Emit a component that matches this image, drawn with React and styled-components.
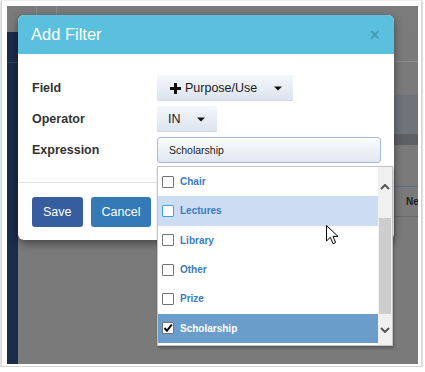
import styled, { createGlobalStyle } from 'styled-components';

const GlobalStyle = createGlobalStyle`
    html, body {
        margin: 0;
        padding: 0;
        background: #fff;
    }
    body {
        font-family: "Liberation Sans", Arial, sans-serif;
    }
    * {
        box-sizing: border-box;
    }
`;

const options = [
    { label: 'Chair', state: 'idle' },
    { label: 'Lectures', state: 'hover' },
    { label: 'Library', state: 'idle' },
    { label: 'Other', state: 'idle' },
    { label: 'Prize', state: 'idle' },
    { label: 'Scholarship', state: 'selected' },
];

function Caret() {
    return (
        <svg width="8" height="5" viewBox="0 0 8 5">
            <path d="M0 0.5 L8 0.5 L4 4.5 Z" fill="#111" />
        </svg>
    );
}

function Plus() {
    return (
        <svg width="11" height="11" viewBox="0 0 11 11">
            <rect x="4" y="0" width="3" height="11" fill="#111" />
            <rect x="0" y="4" width="11" height="3" fill="#111" />
        </svg>
    );
}

function Chevron({ down }) {
    return (
        <svg width="10" height="6" viewBox="0 0 10 6">
            <polyline
                points={down ? '1,1 5,5 9,1' : '1,5 5,1 9,5'}
                fill="none"
                stroke="#555"
                strokeWidth="2"
            />
        </svg>
    );
}

function Check() {
    return (
        <svg width="10" height="10" viewBox="0 0 10 10">
            <polyline points="1.5,5 4,7.8 8.8,1.5" fill="none" stroke="#000" strokeWidth="2" />
        </svg>
    );
}

function Pointer() {
    return (
        <svg width="13" height="20" viewBox="0 0 13 20">
            <path
                d="M0.5 0.5 L0.5 16 L4.3 12.3 L7 18.7 L9.6 17.6 L7 11.4 L12 11.4 Z"
                fill="#fff"
                stroke="#000"
                strokeWidth="1"
                strokeLinejoin="round"
            />
        </svg>
    );
}

export default function App() {
    return (
        <>
            <GlobalStyle />
            <Frame>
                <Screen>
                    <TopBar>
                        <TopCell $w={30} />
                        <TopCell $w={20} />
                    </TopBar>
                    <Sidebar>
                        <SideBlock />
                    </Sidebar>
                    <Content>
                        <Band $h={29} $line="#8b8b8b" />
                        <Band $h={33} />
                        <Band $h={39} $bg="#6f737a" />
                        <Band $h={11} $bg="#5f6063" />
                        <Band $h={41} $line="#5e6f88" />
                        <HeaderRow>Ne</HeaderRow>
                    </Content>

                    <Modal>
                        <ModalHeader>
                            <Title>Add Filter</Title>
                            <Close>×</Close>
                        </ModalHeader>
                        <ModalBody>
                            <Label>Field</Label>
                            <div>
                                <DropButton>
                                    <Plus />
                                    <ButtonText>Purpose/Use</ButtonText>
                                    <Caret />
                                </DropButton>
                            </div>
                            <Label>Operator</Label>
                            <div>
                                <DropButton $small>
                                    <ButtonText>IN</ButtonText>
                                    <Caret />
                                </DropButton>
                            </div>
                            <Label>Expression</Label>
                            <ExpressionInput>Scholarship</ExpressionInput>
                        </ModalBody>
                        <ModalFooter>
                            <ActionButton $variant="save">Save</ActionButton>
                            <ActionButton>Cancel</ActionButton>
                        </ModalFooter>
                    </Modal>

                    <Dropdown>
                        <List>
                            {options.map(({ label, state }) => (
                                <Option key={label} $state={state}>
                                    <CheckBox $state={state}>
                                        {state === 'selected' && <Check />}
                                    </CheckBox>
                                    {label}
                                </Option>
                            ))}
                        </List>
                        <ScrollBar>
                            <ScrollArrow $h={40}>
                                <Chevron />
                            </ScrollArrow>
                            <Thumb />
                            <ScrollArrow $grow>
                                <Chevron down />
                            </ScrollArrow>
                        </ScrollBar>
                    </Dropdown>

                    <Cursor>
                        <Pointer />
                    </Cursor>
                </Screen>
            </Frame>
        </>
    );
}

const Frame = styled.div`
    width: 421px;
    height: 367px;
    margin-left: 1px;
    padding: 5px 3px 2px 5px;
    background: #fff;
    border: 1px solid #d4d4d4;
    border-top-color: #ededed;
    box-shadow: 0 1px 2px rgba(0, 0, 0, 0.35);
`;

const Screen = styled.div`
    position: relative;
    width: 411px;
    height: 358px;
    overflow: hidden;
    display: grid;
    grid-template-columns: 11px 1fr;
    grid-template-rows: 26px 1fr;
    background: #7a7a7a;
`;

const TopBar = styled.div`
    grid-column: 1 / -1;
    display: flex;
    background: #7b7b7b;
`;

const TopCell = styled.div`
    width: ${({ $w }) => $w}px;
    height: 100%;
    border-right: 1px solid #8a8a8a;
`;

const Sidebar = styled.div`
    background: #1b2b4a;
`;

const SideBlock = styled.div`
    height: 31px;
    border-bottom: 1px solid #2f4165;
`;

const Content = styled.div`
    display: flex;
    flex-direction: column;
    background: #7a7a7a;
`;

const Band = styled.div`
    flex-shrink: 0;
    height: ${({ $h, $line }) => $h + ($line ? 1 : 0)}px;
    background: ${({ $bg }) => $bg || 'transparent'};
    border-bottom: ${({ $line }) => ($line ? `1px solid ${$line}` : 'none')};
`;

const HeaderRow = styled.div`
    flex-shrink: 0;
    height: 30px;
    display: flex;
    align-items: center;
    padding-left: 388px;
    border-bottom: 1px solid #6b6b6b;
    font-size: 10px;
    font-weight: 700;
    color: #1e1e1e;
    white-space: nowrap;
`;

const Modal = styled.div`
    position: absolute;
    left: 11px;
    top: 9px;
    width: 376px;
    height: 225px;
    background: #fff;
    border-radius: 6px;
    overflow: hidden;
    box-shadow: 0 3px 9px rgba(0, 0, 0, 0.45);
`;

const ModalHeader = styled.div`
    height: 39px;
    padding: 0 14px 0 13px;
    display: flex;
    align-items: center;
    justify-content: space-between;
    background: #5bc0de;
`;

const Title = styled.div`
    font-size: 16.5px;
    color: #fff;
`;

const Close = styled.div`
    font-size: 18px;
    font-weight: 700;
    line-height: 1;
    color: rgba(0, 0, 0, 0.2);
`;

const ModalBody = styled.div`
    height: 128px;
    padding: 21px 14px 0;
    display: grid;
    grid-template-columns: 125px 1fr;
    grid-template-rows: 26px 26px 26px;
    row-gap: 5px;
`;

const Label = styled.div`
    display: flex;
    align-items: center;
    font-size: 12.5px;
    font-weight: 700;
    color: #333;
`;

const DropButton = styled.div`
    display: inline-flex;
    align-items: center;
    height: 26px;
    width: ${({ $small }) => ($small ? 60 : 136)}px;
    padding-left: ${({ $small }) => ($small ? 11 : 13)}px;
    border-radius: 2px;
    background: linear-gradient(#f4f7fb, #dbe3ee);
    box-shadow: inset 0 -1px 0 #d0d9e6;

    & > svg:last-child {
        margin-left: ${({ $small }) => ($small ? 16 : 17)}px;
    }
`;

const ButtonText = styled.span`
    margin-left: 4px;
    font-size: 12.5px;
    color: #1b1b1b;

    &:first-child {
        margin-left: 0;
    }
`;

const ExpressionInput = styled.div`
    width: 224px;
    height: 26px;
    display: flex;
    align-items: center;
    padding-left: 11px;
    border: 1px solid #a7bcda;
    border-radius: 3px;
    background: linear-gradient(#fbfcfe, #dfe7f2);
    font-size: 10.5px;
    color: #1b1b1b;
`;

const ModalFooter = styled.div`
    display: flex;
    gap: 8px;
    padding: 14px;
    border-top: 1px solid #e5e5e5;
`;

const ActionButton = styled.div`
    height: 30px;
    padding: 0 11px;
    display: flex;
    align-items: center;
    border-radius: 3px;
    font-size: 12.5px;
    color: #fff;
    background: ${({ $variant }) => ($variant === 'save' ? '#355d9f' : '#337ab7')};
`;

const Dropdown = styled.div`
    position: absolute;
    left: 150px;
    top: 160px;
    width: 236px;
    height: 180px;
    display: flex;
    background: #fff;
    border: 1px solid #c4c4c4;
    box-shadow: 1px 2px 3px rgba(0, 0, 0, 0.3);
`;

const List = styled.div`
    flex: 1;
    padding-bottom: 2px;
    display: flex;
    flex-direction: column;
`;

const Option = styled.div`
    height: 29.4px;
    display: flex;
    align-items: center;
    gap: 6px;
    padding-left: 4px;
    font-size: 10px;
    font-weight: 700;
    color: ${({ $state }) => ($state === 'selected' ? '#fff' : '#3a7bbf')};
    background: ${({ $state }) => {
        if ($state === 'selected') return '#6a9dc9';
        if ($state === 'hover') return '#ccddf3';
        return 'transparent';
    }};
`;

const CheckBox = styled.span`
    width: 12px;
    height: 12px;
    display: flex;
    align-items: center;
    justify-content: center;
    background: #fff;
    border: 1px solid ${({ $state }) => ($state === 'hover' ? '#3fa3e0' : '#737373')};
    border-radius: 1px;
`;

const ScrollBar = styled.div`
    width: 14px;
    display: flex;
    flex-direction: column;
    background: #f0f0f0;
`;

const ScrollArrow = styled.div`
    height: ${({ $h }) => ($h ? `${$h}px` : 'auto')};
    flex: ${({ $grow }) => ($grow ? 1 : 'none')};
    display: flex;
    align-items: center;
    justify-content: center;
`;

const Thumb = styled.div`
    height: 96px;
    margin: 11px 1px 0;
    background: #cdcdcd;
`;

const Cursor = styled.div`
    position: absolute;
    left: 319px;
    top: 219px;
    line-height: 0;
`;
